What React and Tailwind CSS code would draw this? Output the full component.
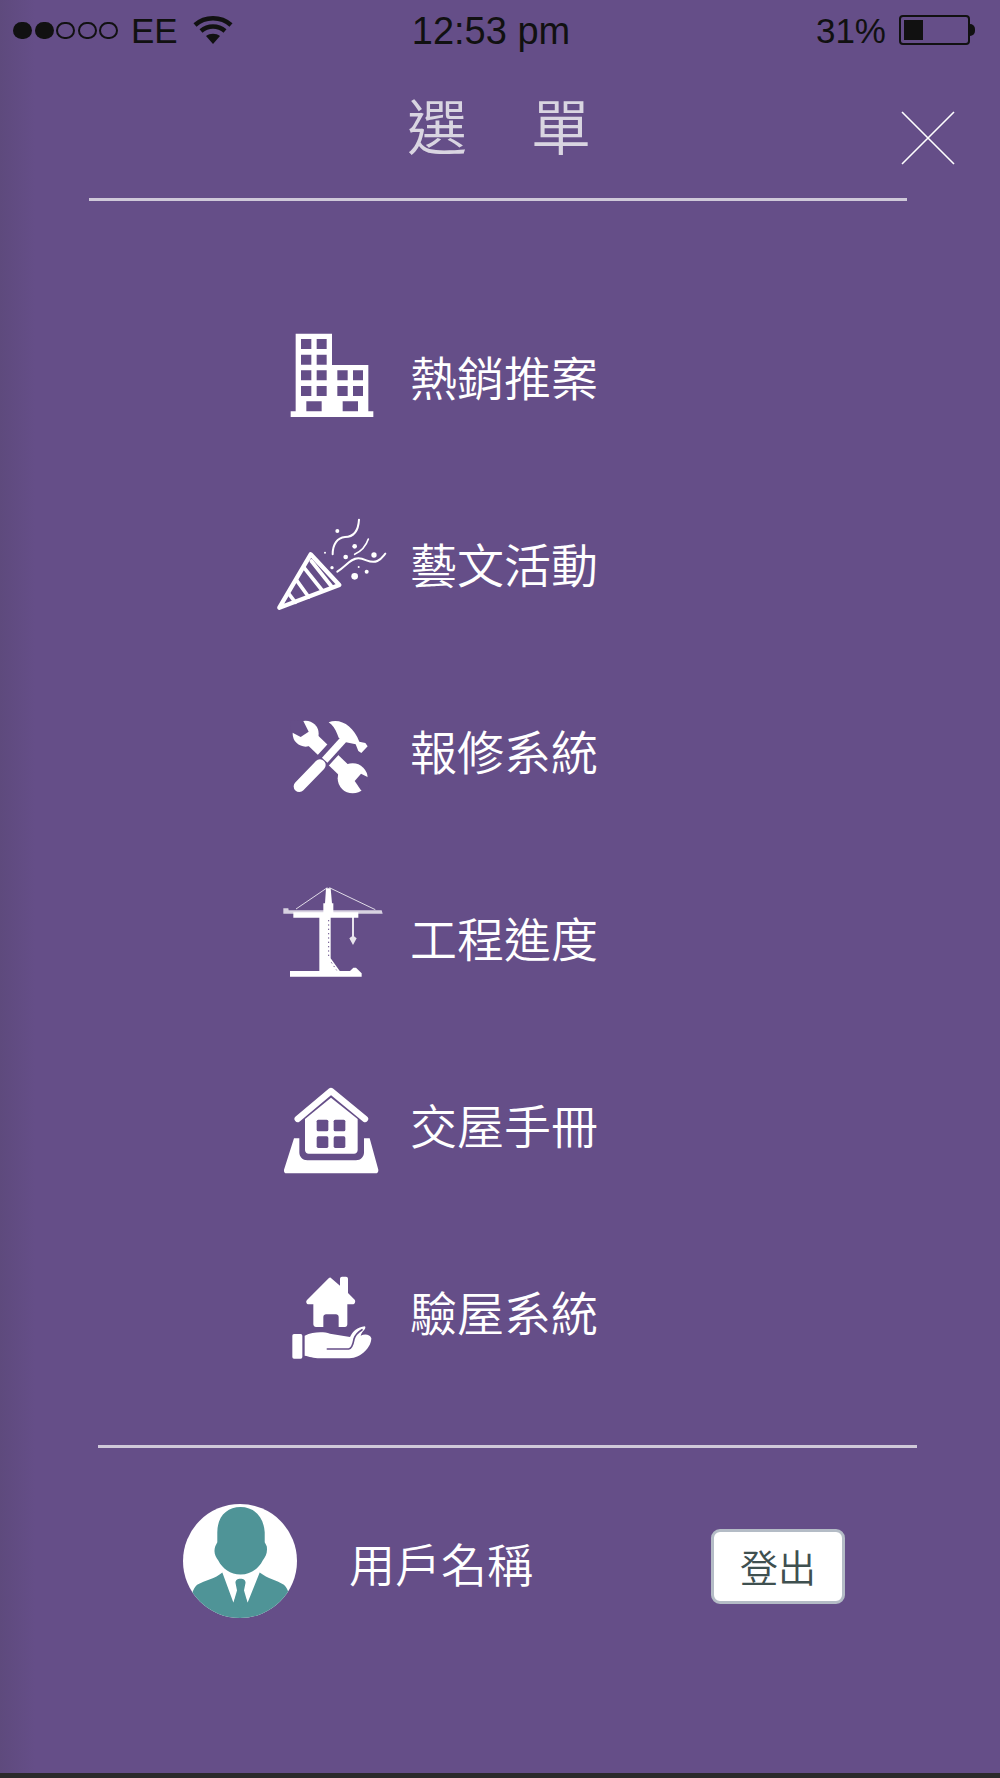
import React from "react";

const cjk = { fontFamily: '"Noto Sans CJK TC", "Noto Sans", sans-serif' };

// viewBoxes are offset per icon so each drawing sits right in its 140x130 box
const BuildingIcon = () => (
  <svg width="140" height="130" viewBox="0 9 420 390" fill="#fff">
    <path
      fillRule="evenodd"
      d="M107 68H216V162H325V301H340V318H92V301H107Z
      M123 84V114H154V84Z M170 84V114H200V84Z
      M123 131V161H154V131Z M170 131V161H200V131Z
      M123 178V208H154V178Z M170 178V208H200V178Z M232 178V208H263V178Z M279 178V208H309V178Z
      M123 225V255H154V225Z M170 225V255H200V225Z M232 225V255H263V225Z M279 225V255H309V225Z
      M139 271V301H185V271Z M248 271V301H294V271Z"
    />
  </svg>
);

const PartyIcon = () => (
  <svg width="140" height="130" viewBox="0 0 420 390" fill="none" stroke="#fff" strokeLinecap="round" strokeLinejoin="round">
    <path d="M152 160L238 252L58 320Z" strokeWidth="13" />
    <path d="M132 200L188 270M110 238L146 288M86 278L106 304M154 180L216 258" strokeWidth="11" />
    <path d="M297 56C295 90 280 108 255 108C232 110 218 130 218 160" strokeWidth="6" />
    <path d="M325 114C318 135 305 150 284 160" strokeWidth="5" />
    <path d="M232 212C258 195 272 172 295 172C318 172 330 190 352 180C365 174 370 165 376 158" strokeWidth="6" />
    <g fill="#fff" stroke="none">
      <circle cx="232" cy="90" r="6" />
      <circle cx="284" cy="136" r="7" />
      <circle cx="257" cy="168" r="7" />
      <circle cx="195" cy="155" r="3" />
      <circle cx="342" cy="162" r="8" />
      <circle cx="216" cy="200" r="5" />
      <circle cx="284" cy="226" r="10" />
      <circle cx="320" cy="212" r="6" />
      <circle cx="296" cy="198" r="3" />
    </g>
  </svg>
);

const ToolsIcon = () => (
  <svg width="140" height="130" viewBox="0 -39 420 390">
    {/* wrench */}
    <path d="M140 100L275 230" stroke="#fff" strokeWidth="42" />
    <circle cx="137" cy="98" r="39" fill="#fff" />
    <circle cx="278" cy="232" r="45" fill="#fff" />
    <path d="M90 60L128 56L146 92L122 108L92 92Z" fill="#654e88" />
    <path d="M330 232L303 218L284 240L302 266L322 285Z" fill="#654e88" />
    {/* hammer */}
    <path d="M118 256L250 112" stroke="#654e88" strokeWidth="46" strokeLinecap="round" />
    <path d="M118 256L180 192" stroke="#fff" strokeWidth="34" strokeLinecap="round" />
    <path d="M194 178L254 112" stroke="#fff" strokeWidth="22" />
    <path
      fill="#fff"
      d="M232 100C226 84 218 72 206 64C240 50 280 74 298 122L316 126L323 136L304 156L295 150L287 130L258 124L236 110Z"
    />
  </svg>
);

const CraneIcon = () => (
  <svg width="140" height="130" viewBox="-30 0 420 390" fill="#fff" stroke="none">
    <path d="M40 100H55L56 106H335L338 116H72L68 116H40Z" opacity="0.75" />
    <path d="M70 112H160V85H165L168 40H182L186 85H190V112H265V128H182V250L212 292H148V128H70Z" />
    <path d="M172 38L78 102M178 38L316 104" stroke="#fff" strokeWidth="3" opacity="0.8" fill="none" />
    <path d="M246 124H252V184L260 190L249 210L238 190L246 184Z" opacity="0.85" />
    <path d="M60 288H240L250 278H258L275 295V305H60Z" />
    <path d="M176 135V250M184 262L200 286" stroke="#654e88" strokeWidth="3" strokeDasharray="4 9" fill="none" />
  </svg>
);

const HouseIcon = () => (
  <svg width="140" height="130" viewBox="-30 -39 420 390" fill="#fff">
    <path d="M83 132L183 48L285 132" fill="none" stroke="#fff" strokeWidth="19" strokeLinecap="round" strokeLinejoin="round" />
    <path d="M105 132L183 68L263 132V225C263 232 258 236 252 236H116C110 236 105 232 105 225Z" />
    <path d="M72 190H88V232C88 246 98 256 112 256H258C272 256 282 246 282 232V190H299L325 284C326 291 322 295 316 295H50C44 295 41 291 42 284Z" />
    <g fill="#654e88">
      <rect x="140" y="134" width="35" height="35" rx="5" />
      <rect x="191" y="134" width="35" height="35" rx="5" />
      <rect x="140" y="184" width="35" height="35" rx="5" />
      <rect x="191" y="184" width="35" height="35" rx="5" />
    </g>
  </svg>
);

const HandHouseIcon = () => (
  <svg width="140" height="130" viewBox="-30 -48 420 390" fill="#fff">
    <path
      fillRule="evenodd"
      d="M182 38L210 62V42C210 37 213 35 216 35H228C231 35 234 37 234 42V84L254 104C258 110 254 118 248 118H232V178C232 183 229 186 225 186H206V156C206 151 202 148 198 148H168C164 148 160 151 160 156V186H138C134 186 130 183 130 178V118H116C110 118 106 110 111 105L176 40C178 38 180 37 182 38Z"
    />
    <rect x="67" y="207" width="30" height="74" rx="5" />
    <path d="M104 212C130 200 160 200 180 206L240 216C248 200 262 186 285 184C290 192 276 198 272 212C285 206 300 208 304 220C304 245 275 280 238 280H150C130 280 118 274 104 272Z" />
    <path d="M172 252H236C248 250 250 232 252 222C256 208 266 200 276 194" fill="none" stroke="#654e88" strokeWidth="5" strokeLinecap="round" />
  </svg>
);

const Avatar = () => (
  <div className="w-[114px] h-[114px] rounded-full bg-white overflow-hidden shrink-0">
    <svg width="114" height="114" viewBox="0 0 113 113" fill="#4f9497">
      <path d="M57 3C70 3 80 12 81 28V38L83 42C84 48 82 52 79 56C75 64 67 70 57 70C47 70 39 64 35 56C32 52 30 48 32 42L34 38V28C34 12 44 3 57 3Z" />
      <path d="M39 68C32 74 22 76 14 80C10 84 8 90 8 96V113H106V96C106 90 104 84 100 80C93 76 84 74 76 68L64 98L60 88L62 78C62 75 60 74 57 74C54 74 52 75 52 78L54 88L50 98Z" />
      <path d="M50 98L54 84H60L64 98L57 104Z" />
    </svg>
  </div>
);

const menuItems = [
  { label: "熱銷推案", Icon: BuildingIcon },
  { label: "藝文活動", Icon: PartyIcon },
  { label: "報修系統", Icon: ToolsIcon },
  { label: "工程進度", Icon: CraneIcon },
  { label: "交屋手冊", Icon: HouseIcon },
  { label: "驗屋系統", Icon: HandHouseIcon },
];

const StatusBar = () => (
  <div
    className="h-[60px] flex items-center justify-between pl-[13px] pr-[25px] text-[#111] text-[35px] leading-none"
    style={{ fontFamily: '"Liberation Sans", sans-serif' }}
  >
    {/* carrier */}
    <div className="flex items-center w-[300px]">
      <div className="flex items-center gap-[2.5px]">
        <span className="w-[19px] h-[17px] rounded-full bg-[#111]"></span>
        <span className="w-[19px] h-[17px] rounded-full bg-[#111]"></span>
        <span className="w-[19px] h-[17px] rounded-full border-2 border-[#111]"></span>
        <span className="w-[19px] h-[17px] rounded-full border-2 border-[#111]"></span>
        <span className="w-[19px] h-[17px] rounded-full border-2 border-[#111]"></span>
      </div>
      <span className="ml-[13px] -mr-[1px]">EE</span>
      <svg className="ml-[16px]" width="40" height="30" viewBox="0 0 40 30" fill="none" stroke="#111" strokeWidth="4.5">
        <path d="M2 10C12 1 28 1 38 10" />
        <path d="M8 16C15 10 25 10 32 16" />
        <path d="M20 29L13 21C17 18 23 18 27 21Z" fill="#111" stroke="none" />
      </svg>
    </div>
    <span className="text-[38px] -ml-[6px] mt-[1px]">12:53 pm</span>
    {/* battery */}
    <div className="flex items-center justify-end w-[300px]">
      <span className="text-[35px]">31%</span>
      <div className="ml-[13px] w-[71px] h-[30px] border-2 border-[#111] rounded-[4px] p-[3px]">
        <div className="w-[19px] h-full bg-[#111]"></div>
      </div>
      <div className="w-[5px] h-[12px] bg-[#111] rounded-r-full"></div>
    </div>
  </div>
);

const App = () => {
  return (
    <div
      className="w-[1000px] h-[1778px] flex flex-col bg-[linear-gradient(to_right,#5e4a7d_0px,#654e88_35px)]"
      style={cjk}
    >
      <StatusBar />

      {/* Title */}
      <div className="h-[141px] flex flex-col">
        <div className="flex-1 flex items-start">
          <h1 className="ml-[407px] mt-[29px] text-[60px] leading-[70px] font-[350] tracking-[2px] text-[#d9d5e1]">選　單</h1>
          <svg className="ml-auto mr-[44px] mt-[50px]" width="56" height="56" viewBox="0 0 56 56" stroke="#fff" strokeWidth="1.6">
            <path d="M2 2L54 54M54 2L2 54" />
          </svg>
        </div>
        <div className="ml-[89px] w-[818px] h-[3px] bg-[#cfc9d9]"></div>
      </div>

      {/* Menu */}
      <ul className="mt-[84px] flex flex-col">
        {menuItems.map(({ label, Icon }) => (
          <li key={label} className="h-[187px] pl-[260px] flex items-center gap-[10px]">
            <Icon />
            <span className="-mt-[6px] text-[47px] leading-none font-[350] text-white">{label}</span>
          </li>
        ))}
      </ul>

      <div className="mt-[38px] ml-[98px] w-[819px] h-[3px] bg-[#cfc9d9]"></div>

      {/* User */}
      <div className="mt-[56px] pl-[183px] pr-[155px] flex items-center">
        <Avatar />
        <span className="ml-[52px] mt-[2px] text-[46px] leading-none font-[350] text-white">用戶名稱</span>
        <button
          type="button"
          className="ml-auto mt-[10px] w-[134px] h-[75px] rounded-[9px] border-[3px] border-[#b4bcc6] bg-white text-[38px] leading-none font-[350] text-[#3f5050]"
        >
          登出
        </button>
      </div>

      <div className="mt-auto h-[5px] bg-[#2b2a2b]"></div>
    </div>
  );
};

export default App;
